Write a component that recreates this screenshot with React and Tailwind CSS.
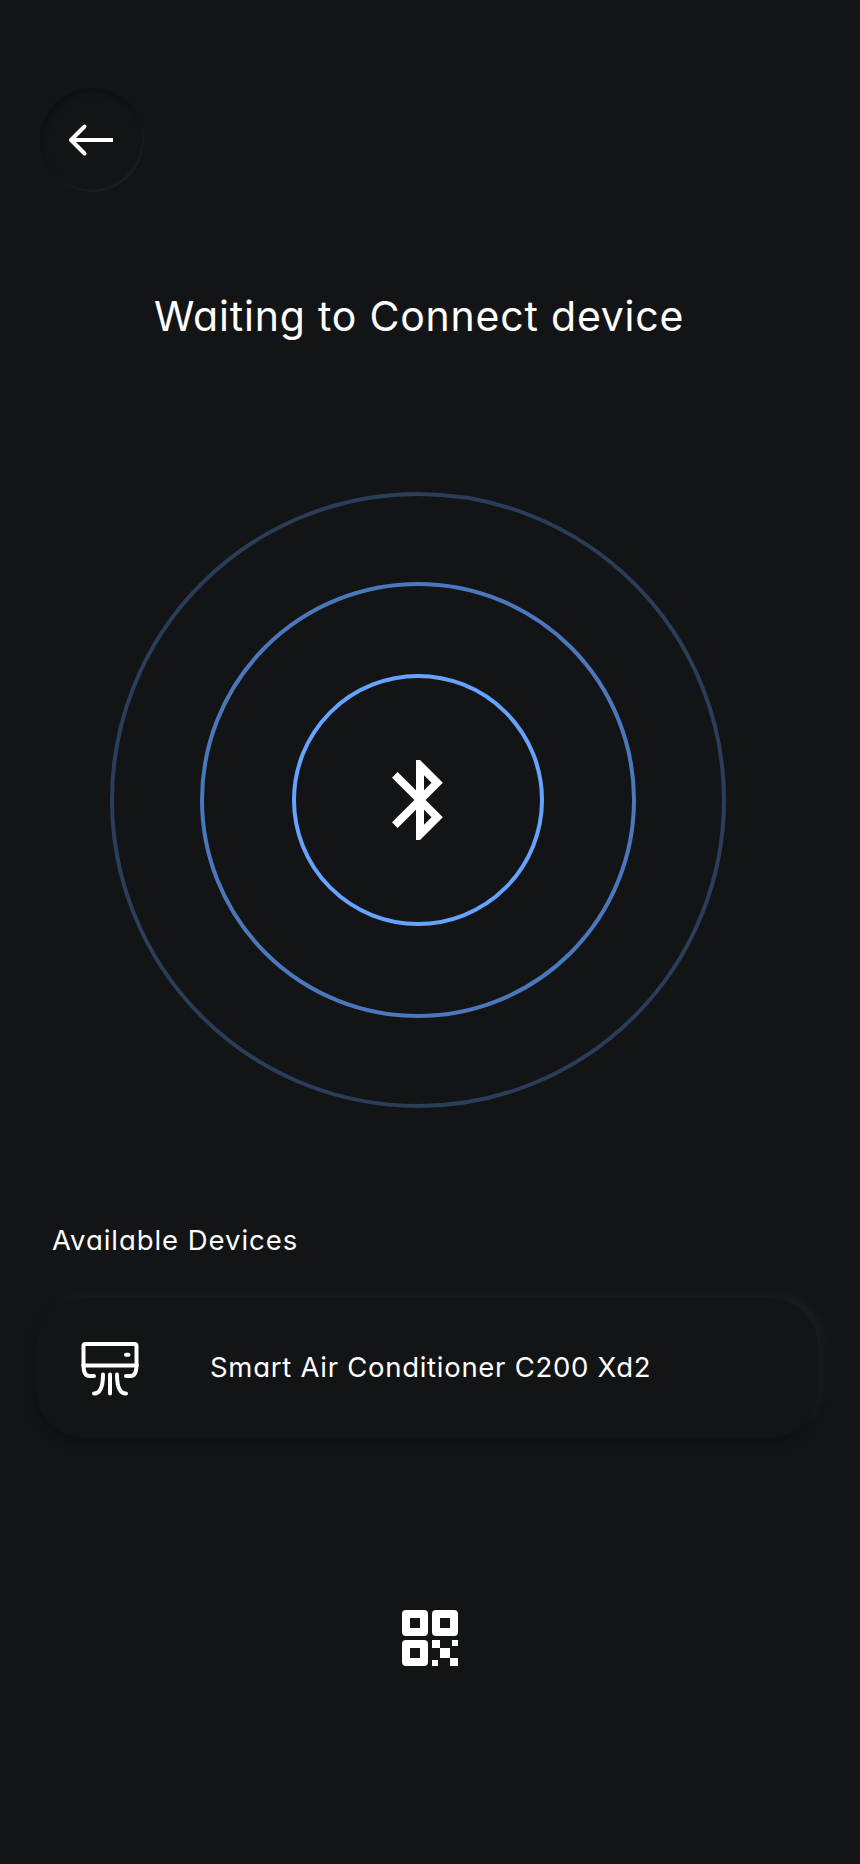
function BackButton() {
  return (
    <button
      aria-label="Back"
      className="ml-10 block size-[104px] rounded-full shadow-[inset_2px_5px_5px_-1px_rgba(0,0,0,0.25),inset_-2px_-3px_3px_-1px_rgba(255,255,255,0.05)]"
    >
      <svg viewBox="0 0 104 104" className="size-[104px]" fill="none" stroke="white" strokeWidth="4">
        <path d="M73 52H32" />
        <path d="M44.500 38.500 31 52l13.500 13.500" strokeLinecap="round" strokeLinejoin="round" />
      </svg>
    </button>
  );
}

function BluetoothIcon() {
  return (
    <svg viewBox="0 0 24 24" className="ml-1 size-24" fill="white">
      <path d="M17.710 7.710 12 2h-1v7.590L6.410 5 5 6.410 10.590 12 5 17.590 6.410 19 11 14.410V22h1l5.710-5.710-4.300-4.290 4.300-4.290zM13 5.830l1.880 1.880L13 9.590V5.830zm1.880 10.460L13 18.170v-3.760l1.880 1.880z" />
    </svg>
  );
}

function AirConditionerIcon() {
  return (
    <svg
      viewBox="0 0 64 64"
      className="size-16 shrink-0"
      fill="none"
      stroke="white"
      strokeWidth="4"
      strokeLinecap="round"
      strokeLinejoin="round"
    >
      <path d="M5.500 29V10Q5.500 8 7.500 8H56.500Q58.500 8 58.500 10V29" />
      <path d="M5.500 29.500H58.500" />
      <path d="M48 18.700H50.500" />
      <path d="M5.500 29Q5.500 40 11.500 40H16M58.500 29Q58.500 40 52.500 40H48" />
      <path d="M32 38.500V57.500M25 38.500Q25 57.500 16 57.500M39 38.500Q39 57.500 48 57.500" />
    </svg>
  );
}

function QrIcon() {
  return (
    <svg viewBox="0 0 56 56" className="size-14" fill="white" fillRule="evenodd">
      <path d="M4 0H22Q26 0 26 4V22Q26 26 22 26H4Q0 26 0 22V4Q0 0 4 0ZM8 8V18H18V8Z" />
      <path d="M34 0H52Q56 0 56 4V22Q56 26 52 26H34Q30 26 30 22V4Q30 0 34 0ZM38 8V18H48V8Z" />
      <path d="M4 30H22Q26 30 26 34V52Q26 56 22 56H4Q0 56 0 52V34Q0 30 4 30ZM8 38V48H18V38Z" />
      <path d="M30 30h8v8h-8zM50 30h6v6h-6zM38 38h10v10H38zM30 50h6v6h-6zM48 48h8v8h-8z" />
    </svg>
  );
}

export default function App() {
  return (
    <main className="flex h-[1864px] w-[860px] flex-col bg-[#131416] pt-[88px] font-['Inter','Open_Sans',sans-serif] text-white [font-feature-settings:'cv11']">
      <BackButton />
      <h1 className="mt-[94px] ml-[154px] h-[60px] text-[41px] leading-[60px] font-normal tracking-[0.790px] whitespace-nowrap">
        Waiting to Connect device
      </h1>

      <div className="mt-[146px] ml-[110px] flex size-[616px] items-center justify-center rounded-full border-4 border-[#2b3d59]">
        <div className="flex size-[436px] items-center justify-center rounded-full border-4 border-[#4b78bd]">
          <div className="flex size-[252px] items-center justify-center rounded-full border-4 border-[#66a3ff]">
            <BluetoothIcon />
          </div>
        </div>
      </div>

      <h2 className="mt-[112px] ml-[52px] h-10 text-[27.500px] leading-10 font-normal tracking-[0.950px] whitespace-nowrap">
        Available Devices
      </h2>
      <button className="mt-[38px] ml-9 flex h-[140px] w-[782px] items-center rounded-[48px] bg-[#131416] pl-[42px] text-left shadow-[5px_-4px_8px_rgba(255,255,255,0.04),-1px_5px_8px_rgba(0,0,0,0.2)]">
        <AirConditionerIcon />
        <span className="-mt-0.5 ml-[68px] text-[27.500px] leading-10 font-normal tracking-[0.720px] whitespace-nowrap">
          Smart Air Conditioner C200 Xd2
        </span>
      </button>

      <button aria-label="Scan QR code" className="mt-[172px] ml-[402px] size-14">
        <QrIcon />
      </button>
    </main>
  );
}
